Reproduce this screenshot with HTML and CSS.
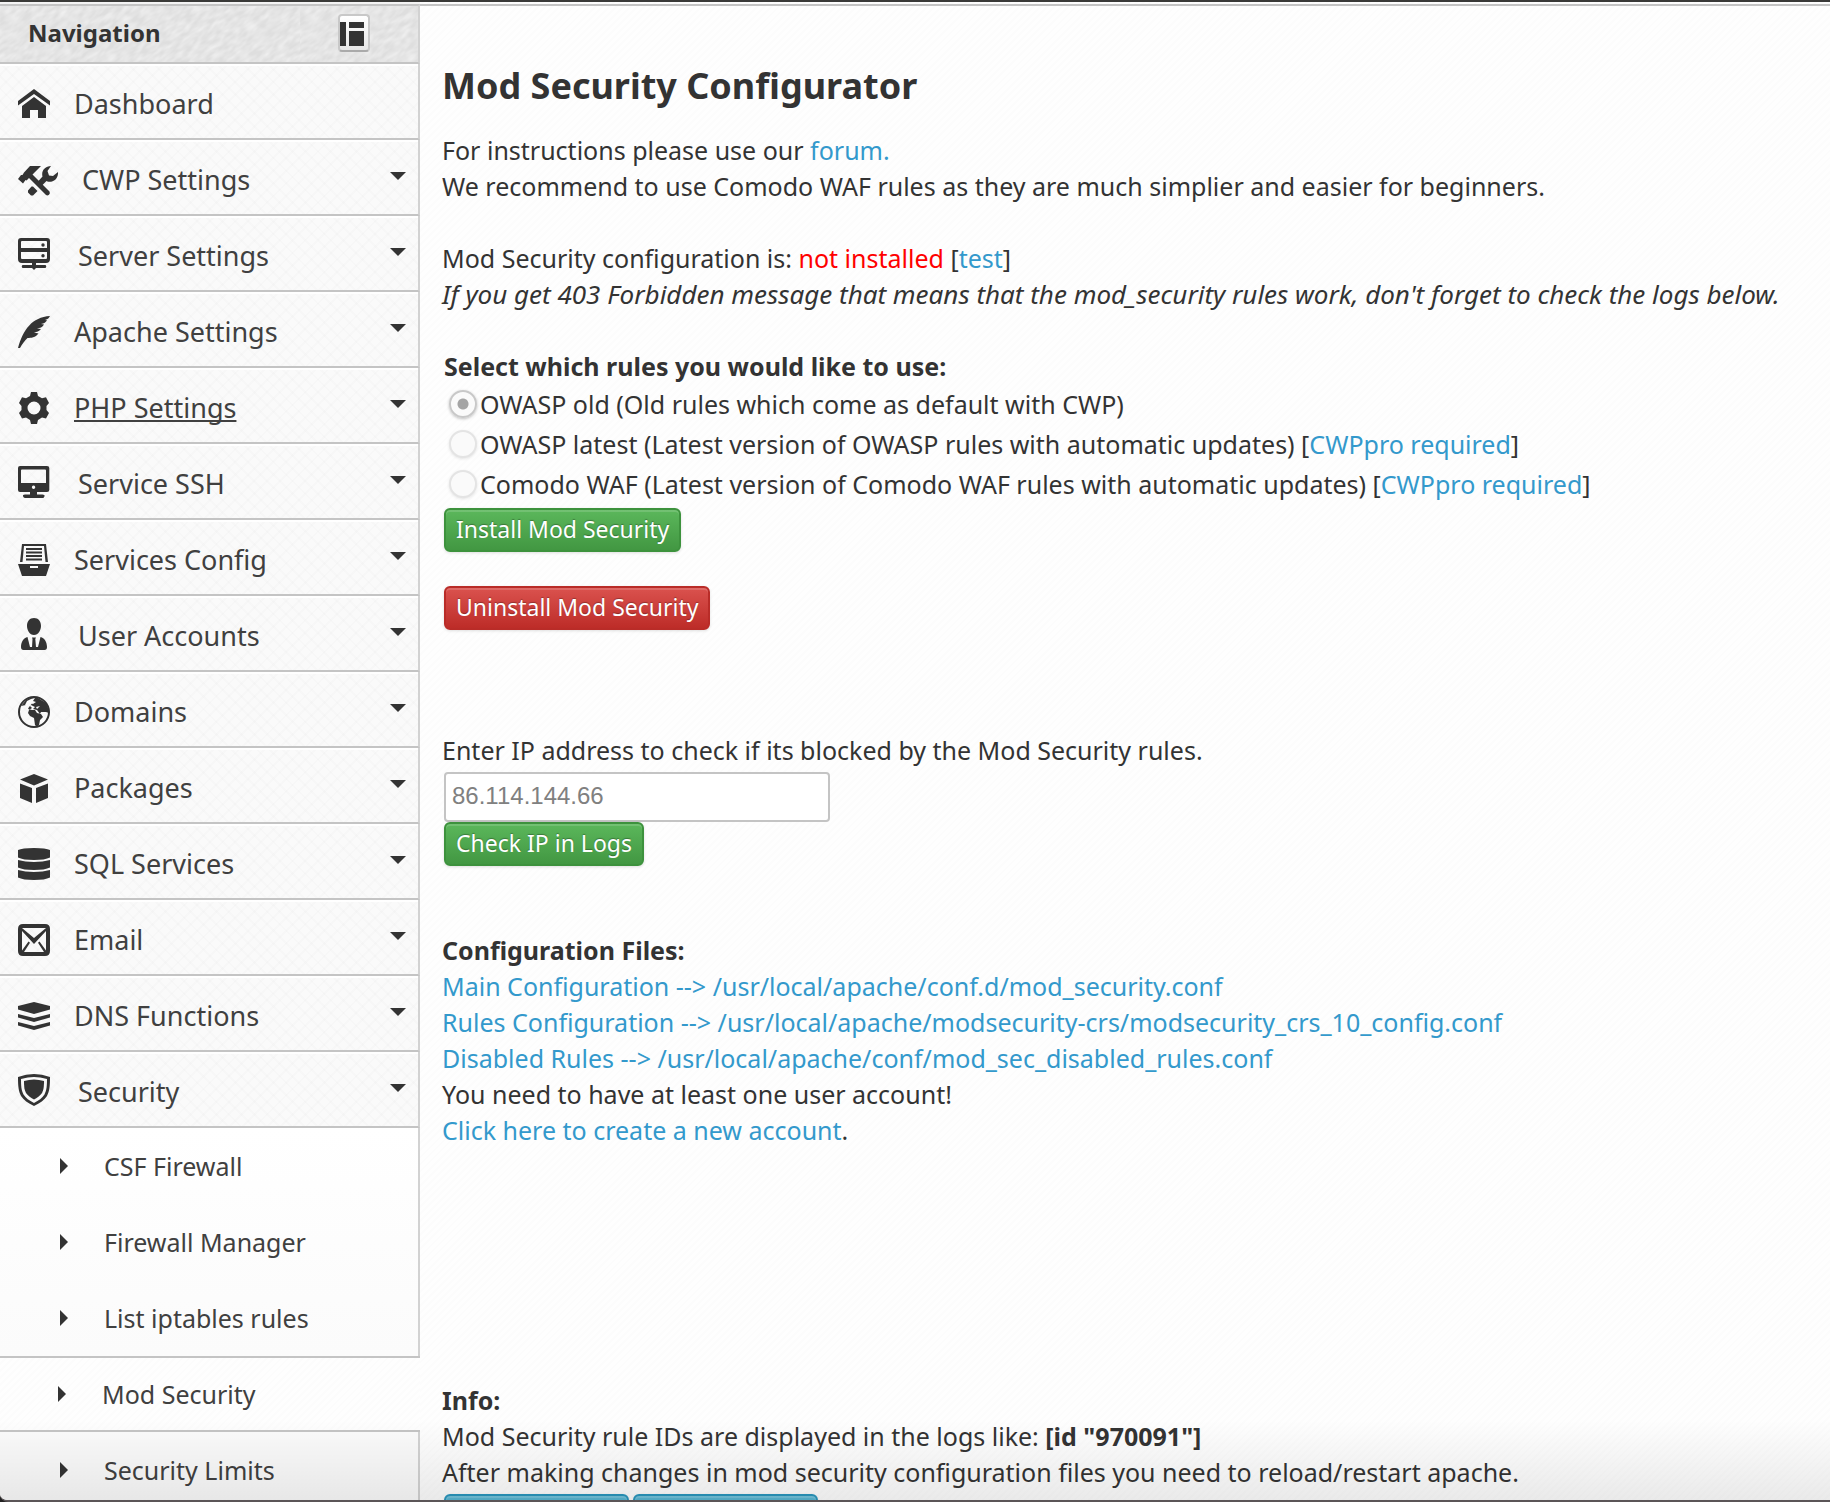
FILE: index.html
```html
<!DOCTYPE html>
<html lang="en">
<head>
<meta charset="utf-8">
<title>Mod Security Configurator</title>
<link rel="stylesheet" href="styles.css">
</head>
<body>
<div class="window">
  <aside class="sidebar">
    <header class="nav-head">
      <h2 class="nav-title">Navigation</h2>
      <button class="toggle" type="button" aria-label="Collapse navigation">
        <svg width="24" height="26" viewBox="0 0 24 26"><path d="M0 0h6v24H0zM9 0h15v6H9zM9 9h15v15H9z"/></svg>
      </button>
    </header>
    <nav>
      <ul class="menu">
        <li><a class="item" href="#"><svg class="ico" viewBox="0 0 32 32"><path d="M16 1 0 13v4.500L16 6l16 11.500V13zM16 9 4 18v12h8v-8h8v8h8V18z"/></svg><span>Dashboard</span></a></li>
        <li><a class="item" href="#"><svg class="ico ico-xl" viewBox="0 0 40 32"><path d="M12 2h11L14.500 10.500 31.500 27.500q1 2-.5 3.200t-3 .3L11 14 8.500 16.500 7.500 16 5 19.500 0 15l3-4 1.500 0 1.500-2.500z"/><path d="M15 22.500 19.500 27 15 31.500h-2L10 28.500v-2L13.500 22.500zM20 17.500l4.500-5C23 7 27 2 33 2l-3.500 5 1.500 4.500 4 .5 5-4c.5 6.500-5 11-10.500 9.500l-1-.5-4.500 4.500z"/></svg><span>CWP Settings</span><i class="caret"></i></a></li>
        <li><a class="item" href="#"><svg class="ico ico-lg" viewBox="0 0 36 36"><path fill-rule="evenodd" d="M3 0h26q3 0 3 3v18q0 4-4 4H18v2h9.500q1.500 1.500 0 3H18l-2 2-2-2H4.500q-1.500-1.500 0-3H14v-2H4q-4 0-4-4V3q0-3 3-3zM4 3q-1 0-1 1v6h26V4q0-1-1-1zM3 14v6q0 1 1 1h24q1 0 1-1v-6z"/><circle cx="25" cy="7" r="1.700"/><circle cx="25" cy="17.700" r="1.700"/></svg><span>Server Settings</span><i class="caret"></i></a></li>
        <li><a class="item" href="#"><svg class="ico" viewBox="0 0 32 32"><path d="M0 32C5 14 14 1 32 0c-1 2-2 3-5 4l2 .3c-1 2-3 3.200-6 3.700l3 .5c-1.500 3-4 3.500-7 4l4 .5c-2 2.500-4 3-7 3.500l4.500 1c-3 4-7.500 4.500-11 4.500-3 2.500-5.500 6.500-7.500 10z"/></svg><span>Apache Settings</span><i class="caret"></i></a></li>
        <li><a class="item" href="#"><svg class="ico" viewBox="0 0 32 32"><path fill-rule="evenodd" d="M13 0h6l1 4 4 2.300 4-1L31 11l-2.500 3v4L31 21l-3 5.500-4-1L20 28l-1 4h-6l-1-4-4-2.500-4 1L1 21l2.500-3v-4L1 11l3-5.700 4 1L12 4zM16 9.500a6.500 6.500 0 1 0 0 13 6.500 6.500 0 0 0 0-13z"/></svg><span class="hovered">PHP Settings</span><i class="caret"></i></a></li>
        <li><a class="item" href="#"><svg class="ico ico-lg" viewBox="0 0 36 36"><path fill-rule="evenodd" d="M2 0h27q2.300 0 2.300 2v22q0 2-2.300 2H19v2.500h5.500q2.500 0 2 1.800T25 32H7q-1.500 0-2-1.700t2-1.800h5V26H2q-2 0-2-2V2Q0 0 2 0zM4 3.500q-1 0-1 1V17h25V4.500q0-1-1-1zM15.500 19.500a1.700 1.700 0 1 0 .1 0z"/></svg><span>Service SSH</span><i class="caret"></i></a></li>
        <li><a class="item" href="#"><svg class="ico" viewBox="0 0 32 32"><path d="M4 0h24l2 18h-2.500L26 2H6L4.500 18H2zM8 4h16v2H8zM8 7.500h16v2H8zM8 11h16v2H8zM8 14.500h16v2H8z"/><path fill-rule="evenodd" d="M0 20h32l-4 12H4zM12 22v2h8v-2z"/></svg><span>Services Config</span><i class="caret"></i></a></li>
        <li><a class="item" href="#"><svg class="ico ico-lg" viewBox="0 0 36 36"><path d="M16 0c4.500 0 7 3.500 7 8 0 4-2.500 9-7 9s-7-5-7-9c0-4.500 2.500-8 7-8zM9.500 19 12 29h2l.5-8-.5-1.500h4l-.7 1.500L18 29h2l2.500-10c4 1 6.500 5 6.500 10q0 3-2.500 3h-21Q3 32 3 29c0-5 2.500-9 6.500-10z"/></svg><span>User Accounts</span><i class="caret"></i></a></li>
        <li><a class="item" href="#"><svg class="ico" viewBox="0 0 32 32"><circle cx="16" cy="16" r="15" fill="none" stroke="#333" stroke-width="2"/><path d="M3 10 8 4l6-3 6 1 8 5 3 7v3l-3-1-5 0-1 2-3-4-4-1 2-2-4-2-2 2-1 2 4 1 3 0 2 3 4 1 2 3-3 3-1 5-2 2-2-2-1-7-4-2-2-3 1-3 3-2-2-2 3-4-3 0-4 3z"/><path fill="#fafafa" d="m13 3 4-1-2 3 3 1-3 2-3-1-2 3-3-1 2-4zM22 10l-4 1 1 2z"/></svg><span>Domains</span><i class="caret"></i></a></li>
        <li><a class="item" href="#"><svg class="ico" viewBox="0 0 32 32"><path d="M16 2 30 7.500 16 13.500 2 7.500zM2 11.500l12 4.500v15L2 26zM30 11.500 18 16v15l12-5z"/></svg><span>Packages</span><i class="caret"></i></a></li>
        <li><a class="item" href="#"><svg class="ico" viewBox="0 0 32 32"><path d="M0 2q4-2 16-2t16 2v7.500q-5 2.500-16 2.500T0 9.500zM0 12q7 2 16 2t16-2v7.500q-5 2.500-16 2.500T0 19.500zM0 22q7 2 16 2t16-2v7.500q-5 2.500-16 2.500T0 29.500z"/></svg><span>SQL Services</span><i class="caret"></i></a></li>
        <li><a class="item" href="#"><svg class="ico" viewBox="0 0 32 32"><path fill-rule="evenodd" d="M5 0h22q5 0 5 5v22q0 5-5 5H5q-5 0-5-5V5q0-5 5-5zM4 4v24h24V4z"/><path d="M4 4l12 10L28 4v3L16 20 4 7zM10.500 17.500l1.500 1.200L6 28H4v-1.500zM21.500 17.500 20 18.700 26 28h2v-1.500z"/></svg><span>Email</span><i class="caret"></i></a></li>
        <li><a class="item" href="#"><svg class="ico" viewBox="0 0 32 32"><path d="M16 2 32 6v3.500L16 14 0 9.500V6zM0 14l16 4 16-4v3.500L16 22 0 17.500zM0 22l16 4 16-4v3.500L16 30 0 25.500z"/></svg><span>DNS Functions</span><i class="caret"></i></a></li>
        <li><a class="item" href="#"><svg class="ico ico-lg" viewBox="0 0 36 36"><path fill-rule="evenodd" d="M0 3q8-3 16-3t16 3c0 9-.5 14-3 19-2.500 4-7 7-13 10C10 29 5.500 26 3 22 .5 17 0 12 0 3zM3 5c0 7 .3 11 2.500 15.500C8 24 11 26.500 16 29c5-2.500 8-5 10.500-8.500C28.700 16 29 12 29 5Q22 3 16 3T3 5z"/><path d="M6 7q10-3 20 0c0 6-.5 9-2 12-2 3-5 5-8 6.500-3-1.500-6-3.500-8-6.500-1.500-3-2-6-2-12z"/></svg><span>Security</span><i class="caret"></i></a>
          <ul class="submenu">
            <li><a class="subitem" href="#"><i class="arrow"></i><span>CSF Firewall</span></a></li>
            <li><a class="subitem" href="#"><i class="arrow"></i><span>Firewall Manager</span></a></li>
            <li><a class="subitem" href="#"><i class="arrow"></i><span>List iptables rules</span></a></li>
            <li><a class="subitem current" href="#"><i class="arrow"></i><span>Mod Security</span></a></li>
            <li><a class="subitem" href="#"><i class="arrow"></i><span>Security Limits</span></a></li>
          </ul>
        </li>
      </ul>
    </nav>
  </aside>
  <main class="content">
    <h1 class="title">Mod Security Configurator</h1>
    <p>For instructions please use our <a href="#">forum.</a><br>We recommend to use Comodo WAF rules as they are much simplier and easier for beginners.</p>
    <p>Mod Security configuration is: <span class="alert">not installed</span> [<a href="#">test</a>]<br><em>If you get 403 Forbidden message that means that the mod_security rules work, don't forget to check the logs below.</em></p>
    <form class="rules">
      <fieldset>
        <legend>Select which rules you would like to use:</legend>
        <div class="choice"><input type="radio" name="rules" id="r1" checked><label for="r1">OWASP old (Old rules which come as default with CWP)</label></div>
        <div class="choice"><input type="radio" name="rules" id="r2"><label for="r2">OWASP latest (Latest version of OWASP rules with automatic updates) [<a href="#">CWPpro required</a>]</label></div>
        <div class="choice"><input type="radio" name="rules" id="r3"><label for="r3">Comodo WAF (Latest version of Comodo WAF rules with automatic updates) [<a href="#">CWPpro required</a>]</label></div>
      </fieldset>
      <button class="btn green" type="button">Install Mod Security</button>
      <button class="btn red" type="button">Uninstall Mod Security</button>
    </form>
    <form class="check">
      <label for="ip">Enter IP address to check if its blocked by the Mod Security rules.</label>
      <input class="ip" id="ip" type="text" placeholder="86.114.144.66">
      <button class="btn green" type="button">Check IP in Logs</button>
    </form>
    <section class="files">
      <strong>Configuration Files:</strong><br>
      <a href="#">Main Configuration --&gt; /usr/local/apache/conf.d/mod_security.conf</a><br>
      <a href="#">Rules Configuration --&gt; /usr/local/apache/modsecurity-crs/modsecurity_crs_10_config.conf</a><br>
      <a href="#">Disabled Rules --&gt; /usr/local/apache/conf/mod_sec_disabled_rules.conf</a><br>
      You need to have at least one user account!<br>
      <a href="#">Click here to create a new account</a>.
    </section>
    <section class="info">
      <strong>Info:</strong><br>
      Mod Security rule IDs are displayed in the logs like: <strong>[id "970091"]</strong><br>
      After making changes in mod security configuration files you need to reload/restart apache.
      <div class="actions">
        <button class="btn blue" type="button" aria-label="Reload Apache"></button>
        <button class="btn blue" type="button" aria-label="Restart Apache"></button>
      </div>
    </section>
  </main>
  <div class="shade"></div>
</div>
</body>
</html>
```
FILE: styles.css
```css
* { box-sizing: border-box; }

html { background: #222; }

body {
  margin: 0;
  color: #333;
  font: 25px/36px "Noto Sans", "Open Sans", sans-serif;
}

a { color: #3399cc; text-decoration: none; }
ul { list-style: none; margin: 0; padding: 0; }
p { margin: 0 0 36px; }
em { font-size: 26px; }

.window {
  position: relative;
  display: grid;
  grid-template-columns: 420px 1fr;
  height: 100vh;
  overflow: hidden;
  border-top: 2px solid #3a3a38;
  border-bottom: 2px solid #5b5557;
  border-bottom-left-radius: 8px;
  background: repeating-linear-gradient(135deg, #fefefe 0 3px, #fcfcfc 3px 5px);
}

.sidebar { border-top: 2px solid #f4f4f4; }

.nav-head {
  display: flex;
  align-items: center;
  justify-content: space-between;
  height: 60px;
  padding: 0 48px 2px 28px;
  border-top: 2px solid #c4c4c4;
  border-right: 2px solid #d2d2d2;
  border-bottom: 2px solid #c4c4c4;
  background:
    url("data:image/svg+xml,%3Csvg xmlns='http://www.w3.org/2000/svg' width='300' height='120'%3E%3Cfilter id='n' x='0' y='0' width='100%25' height='100%25'%3E%3CfeTurbulence type='fractalNoise' baseFrequency='.09 .22' numOctaves='2'/%3E%3CfeColorMatrix values='0 0 0 0 1 0 0 0 0 1 0 0 0 0 1 .9 0 0 0 -.25'/%3E%3C/filter%3E%3Crect x='-150' y='-250' width='700' height='600' transform='rotate(-35)' filter='url(%23n)'/%3E%3C/svg%3E"),
    #dedede;
}

.nav-title { margin: 0; font-size: 24px; line-height: 36px; }

.toggle {
  width: 32px;
  height: 38px;
  padding: 4px 0 0;
  border: 2px solid #c8c8c8;
  border-bottom-color: #aaa;
  border-radius: 4px;
  background: linear-gradient(#fff, #e6e6e6);
  text-align: left;
}
.toggle svg { display: block; fill: #333; }

.item, .subitem { display: flex; color: #404040; }

.item {
  align-items: center;
  gap: 24px;
  height: 76px;
  padding: 6px 12px 0 18px;
  border-right: 2px solid #d2d2d2;
  border-bottom: 2px solid #c4c4c4;
  background:
    repeating-linear-gradient(45deg, transparent 0 7px, rgba(0, 0, 0, .012) 7px 9px),
    repeating-linear-gradient(135deg, transparent 0 7px, rgba(0, 0, 0, .012) 7px 9px),
    #fafafa;
  box-shadow: inset 0 2px 0 #fff;
  font-size: 27px;
}

.ico { flex: none; width: 32px; height: 32px; fill: #333; }
.ico-lg { width: 36px; height: 36px; }
.ico-xl { width: 40px; }
.hovered { text-decoration: underline; text-decoration-skip-ink: none; }

.caret {
  align-self: flex-start;
  margin: 26px 0 0 auto;
  border: 8px solid transparent;
  border-top-color: #333;
  border-bottom: 0;
}

.submenu { background: linear-gradient(#fff, #fbfbfb 228px); }

.subitem {
  align-items: center;
  gap: 36px;
  height: 76px;
  padding: 0 12px 0 60px;
  border-right: 2px solid #d2d2d2;
}

.arrow {
  border: 8px solid transparent;
  border-left-color: #333;
  border-right: 0;
}

.current {
  padding-left: 58px;
  border-top: 2px solid #c4c4c4;
  border-right: 0;
  border-bottom: 2px solid #c4c4c4;
  background: repeating-linear-gradient(135deg, #fefefe 0 3px, #fcfcfc 3px 5px);
}

.content {
  margin-top: 2px;
  padding: 58px 20px 0 22px;
  border-top: 2px solid #c4c4c4;
}

.title { margin: 0 0 24px; font-size: 36px; line-height: 44px; }
.alert { color: #f00; }

fieldset { margin: 0; padding: 0; border: 0; }
legend { padding: 0; font-weight: bold; }

.rules, .check {
  display: flex;
  flex-direction: column;
  align-items: flex-start;
}
.rules { gap: 34px; margin: 0 2px 102px; }
.rules fieldset { margin-bottom: -30px; }

.choice { display: flex; align-items: center; gap: 3px; height: 40px; padding-left: 5px; }
.choice input {
  appearance: none;
  flex: none;
  width: 28px;
  height: 28px;
  margin: 0;
  border: 2px solid #e4e4e4;
  border-radius: 50%;
  background: #fafafa;
  box-shadow: 0 1px 3px rgba(0, 0, 0, .1);
}
.choice input:checked {
  border-color: #c8c8c8;
  background: radial-gradient(circle, #a4a4a4 0 5px, #fafafa 6px);
  box-shadow: 0 1px 3px rgba(0, 0, 0, .25);
}

.btn {
  height: 44px;
  padding: 0 10px 2px;
  border: 2px solid;
  border-radius: 6px;
  color: #fff;
  font: inherit;
  font-size: 23px;
  line-height: 36px;
  text-shadow: 0 -1px 1px rgba(0, 0, 0, .3);
  box-shadow: inset 0 2px 0 rgba(255, 255, 255, .15), 0 1px 3px rgba(0, 0, 0, .12);
}
.green { border-color: #3d923d; background: linear-gradient(#5bb75b, #429742); }
.red { border-color: #b92c28; background: linear-gradient(#da524e, #bd2c28); }
.blue { width: 185px; border-color: #2a96bd; background: linear-gradient(#5bb8d4, #339bb9); }

.check { margin: 0 0 66px; }
.check .btn { margin-left: 2px; }
.ip {
  width: 386px;
  height: 50px;
  margin: 4px 0 0 2px;
  padding: 0 6px 2px;
  border: 2px solid #c4c4c4;
  border-radius: 4px;
  background: #fff;
  font: 24px "Liberation Sans", Arial, sans-serif;
}
.ip::placeholder { color: #808080; opacity: 1; }

.files { margin-bottom: 234px; }
.actions { display: flex; gap: 4px; margin: 4px 2px 0; }

/* soft shadow over the bottom edge of the window */
.shade {
  position: absolute;
  inset: auto 0 0;
  height: 80px;
  background: linear-gradient(transparent, rgba(0, 0, 0, .08));
  pointer-events: none;
}
```
